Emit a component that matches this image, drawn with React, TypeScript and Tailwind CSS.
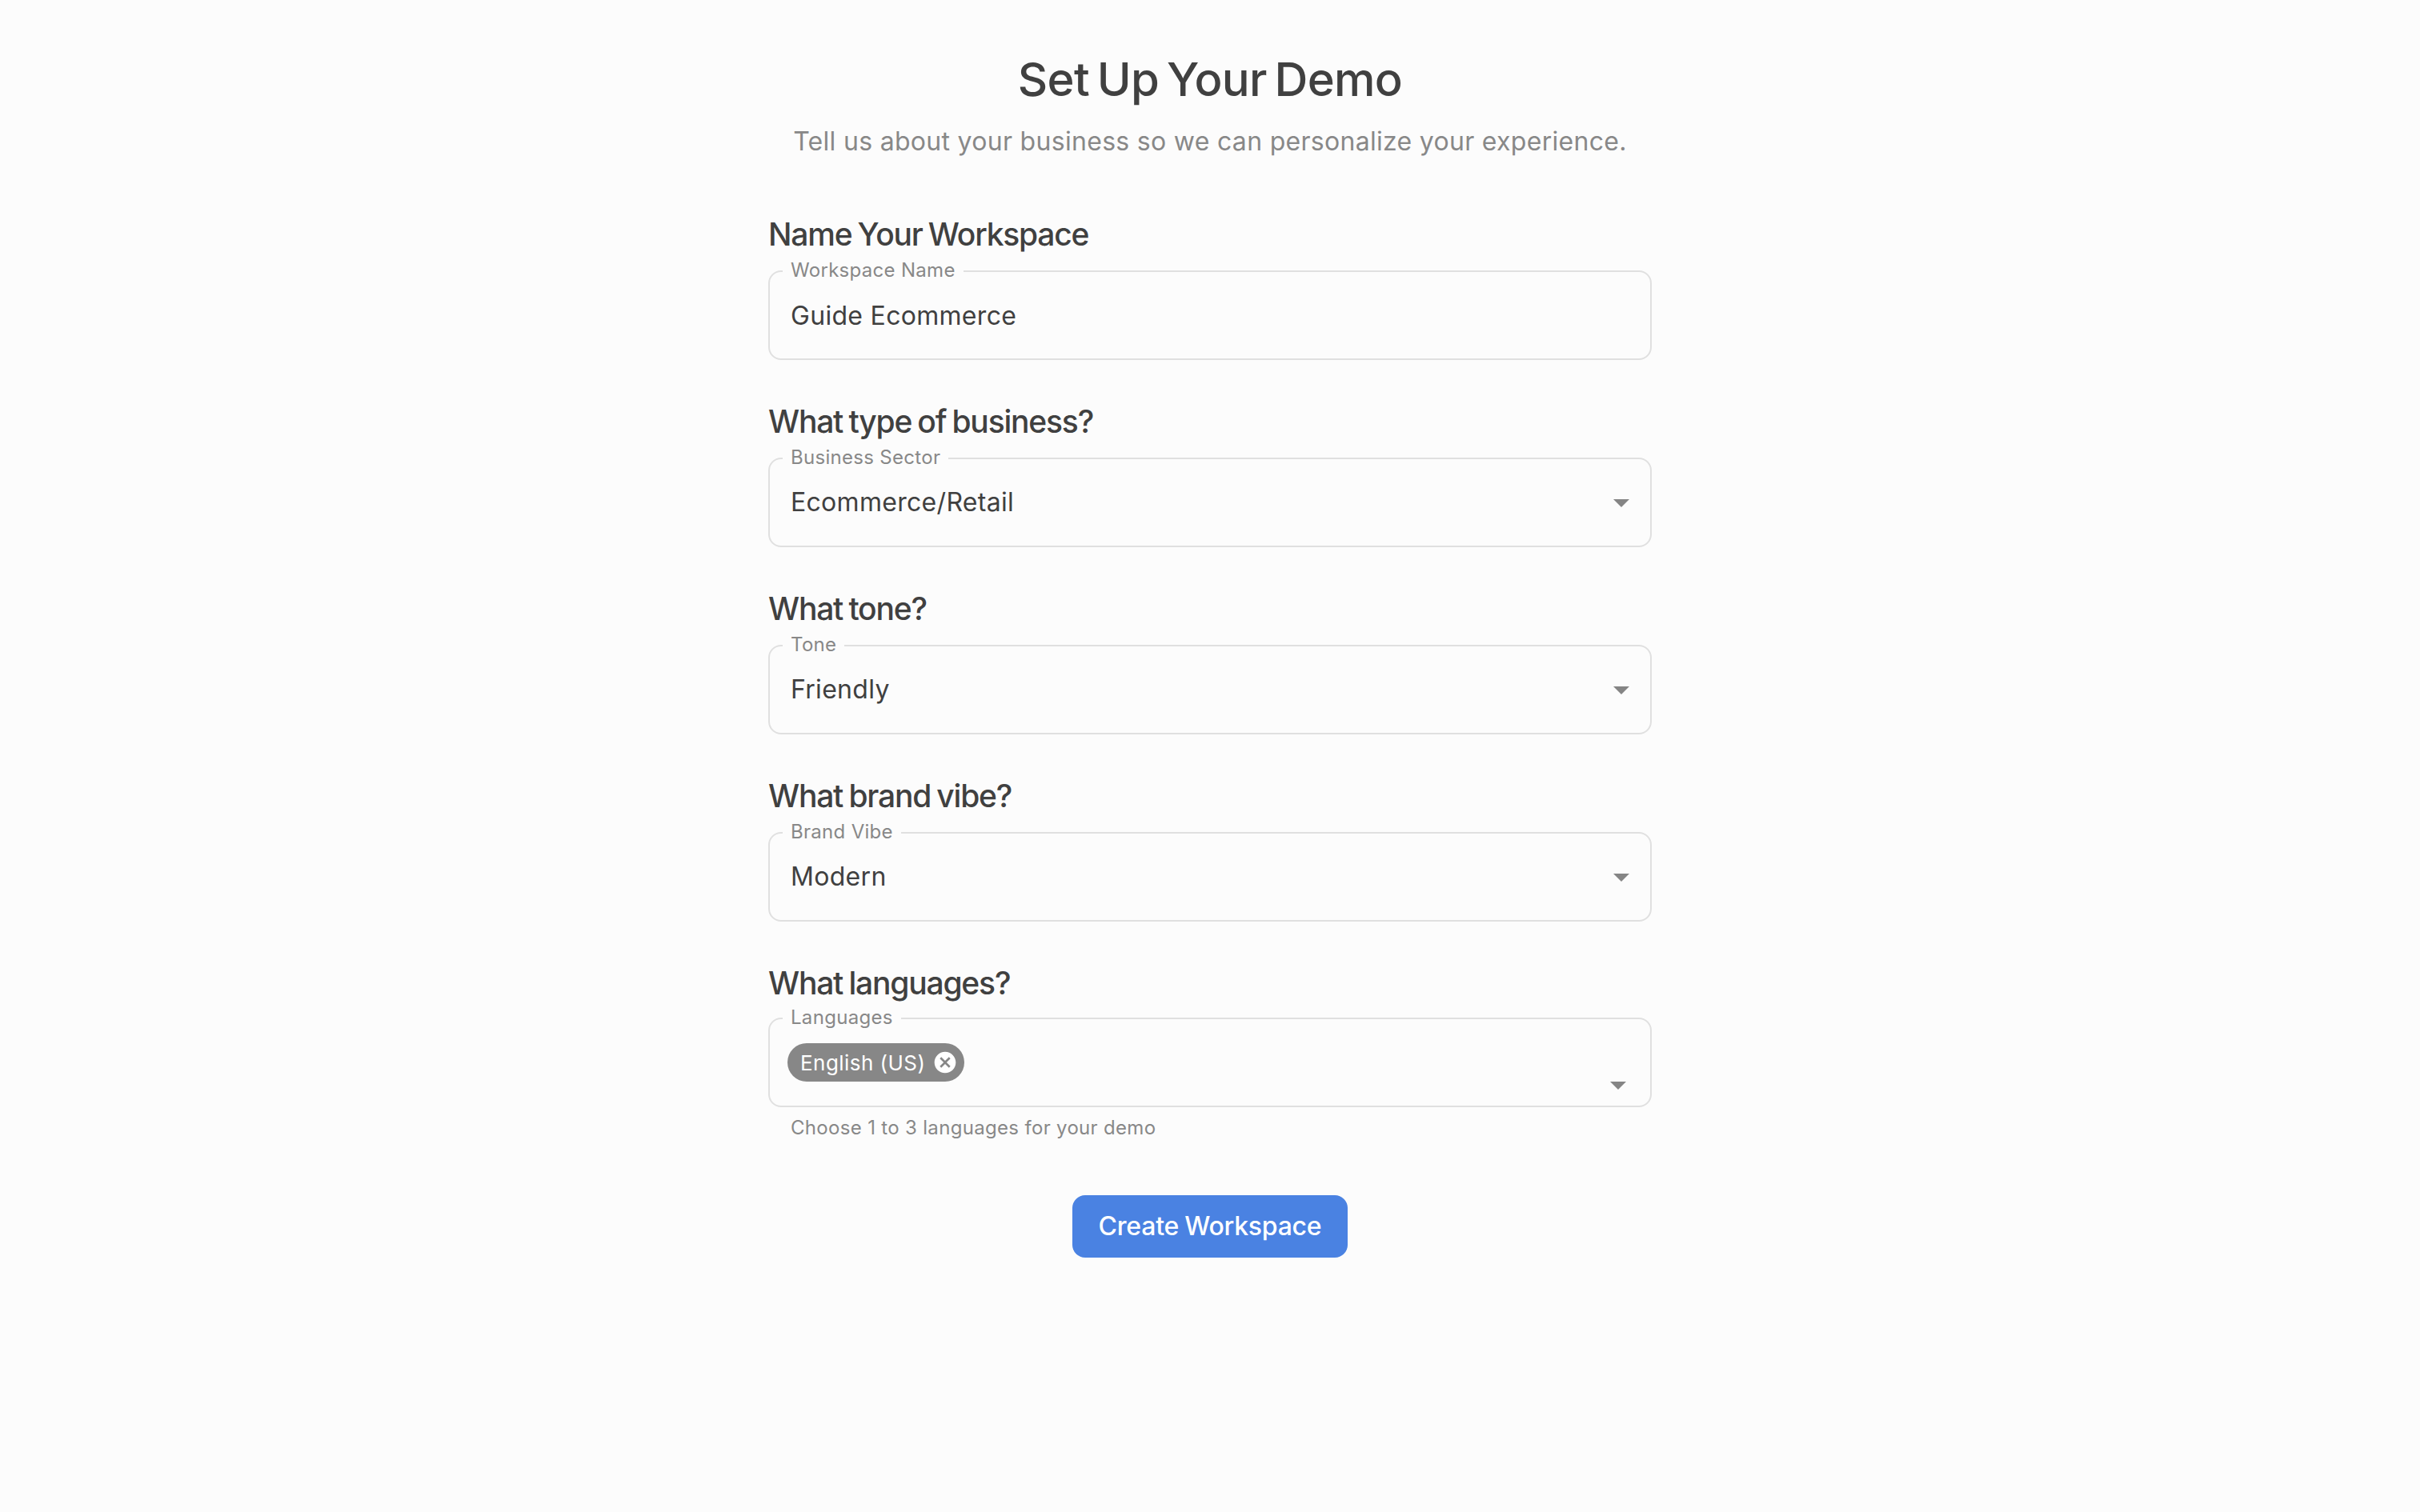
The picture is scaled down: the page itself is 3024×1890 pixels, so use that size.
const bodyFont = "font-['Inter','Liberation_Sans',sans-serif]";

function ArrowDown({ className }: { className: string }) {
  return (
    <svg viewBox="0 0 24 24" className={className} fill="#858585">
      <path d="M7 10l5 5 5-5z" />
    </svg>
  );
}

function FieldBox({ label, children }: { label: string; children: React.ReactNode }) {
  return (
    <div className="relative h-[112px] rounded-2xl border-2 border-[#e0e0e0]">
      <span className="absolute left-[16px] top-[-18px] bg-[#fcfcfc] px-[10px] text-[24px] leading-[32px] tracking-[0.3px] text-[#888888]">
        {label}
      </span>
      {children}
    </div>
  );
}

function SelectField({ heading, label, value }: { heading: string; label: string; value: string }) {
  return (
    <section className="mb-[55px]">
      <h2 className="mb-[23px] text-[39px] leading-[44px] font-medium tracking-[-1.2px] [word-spacing:-2px] text-[#404040]">{heading}</h2>
      <FieldBox label={label}>
        <div className="flex h-full items-center justify-between pr-[12px] pl-[26px]">
          <span className="text-[32px] tracking-[0.3px] text-[#404040]">{value}</span>
          <ArrowDown className="size-[48px]" />
        </div>
      </FieldBox>
    </section>
  );
}

export default function App() {
  return (
    <div className={`flex min-h-screen flex-col items-center bg-[#fcfcfc] pt-[63px] ${bodyFont}`}>
      <h1 className="mb-[20px] text-[58px] leading-[72px] font-medium tracking-[-0.7px] [word-spacing:-5px] text-[#404040]">Set Up Your Demo</h1>
      <p className="mb-[72px] text-[32px] leading-[44px] tracking-[0.3px] text-[#888888]">
        Tell us about your business so we can personalize your experience.
      </p>

      <div className="w-[1104px]">
        <section className="mb-[55px]">
          <h2 className="mb-[23px] text-[39px] leading-[44px] font-medium tracking-[-1.2px] [word-spacing:-2px] text-[#404040]">Name Your Workspace</h2>
          <FieldBox label="Workspace Name">
            <div className="flex h-full items-center pt-[2px] pl-[26px]">
              <span className="text-[32px] tracking-[0.3px] text-[#404040]">Guide Ecommerce</span>
            </div>
          </FieldBox>
        </section>

        <SelectField heading="What type of business?" label="Business Sector" value="Ecommerce/Retail" />
        <SelectField heading="What tone?" label="Tone" value="Friendly" />
        <SelectField heading="What brand vibe?" label="Brand Vibe" value="Modern" />

        <section>
          <h2 className="mb-[21px] text-[39px] leading-[44px] font-medium tracking-[-1.2px] [word-spacing:-2px] text-[#404040]">What languages?</h2>
          <FieldBox label="Languages">
            <div className="flex h-full items-center pl-[22px]">
              <div className="flex h-[48px] items-center gap-[9px] rounded-full bg-[#878787] pr-[8px] pl-[16px]">
                <span className="text-[26px] tracking-[0.45px] text-white">English (US)</span>
                <svg viewBox="0 0 24 24" className="size-[32px]" fill="#ffffff">
                  <path d="M12 2C6.47 2 2 6.47 2 12s4.47 10 10 10 10-4.47 10-10S17.53 2 12 2zm5 13.59L15.59 17 12 13.41 8.41 17 7 15.59 10.59 12 7 8.41 8.41 7 12 10.59 15.59 7 17 8.41 13.41 12 17 15.59z" />
                </svg>
              </div>
            </div>
            <ArrowDown className="absolute top-[58px] right-[16px] size-[48px]" />
          </FieldBox>
          <p className="mt-[10px] pl-[28px] text-[24px] leading-[32px] tracking-[0.32px] text-[#888888]">
            Choose 1 to 3 languages for your demo
          </p>
        </section>

        <div className="mt-[68px] flex justify-center">
          <button className="h-[78px] w-[344px] rounded-2xl bg-[#4a82e2] text-[32px] font-medium tracking-[-0.25px] [word-spacing:-1px] text-white">
            Create Workspace
          </button>
        </div>
      </div>
    </div>
  );
}
